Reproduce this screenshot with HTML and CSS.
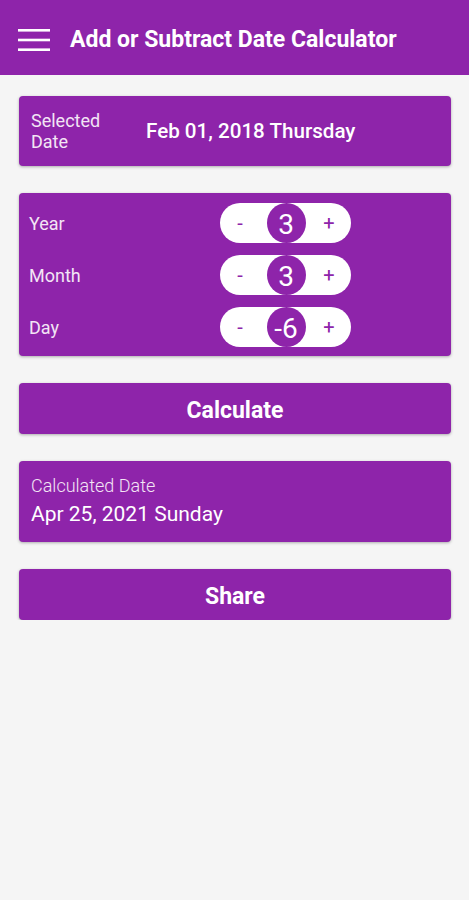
FILE: index.html
```html
<!DOCTYPE html>
<html lang="en">
<head>
    <meta charset="UTF-8">
    <meta name="viewport" content="width=device-width, initial-scale=1.0">
    <title>Add or Subtract Date Calculator</title>
    <link rel="stylesheet" href="styles.css">
</head>
<body>
    <header class="toolbar">
        <svg class="menu" width="32" height="24" viewBox="0 0 32 24">
            <rect x="0" y="1" width="32" height="2.6" fill="#fff"/>
            <rect x="0" y="10.7" width="32" height="2.6" fill="#fff"/>
            <rect x="0" y="20.4" width="32" height="2.6" fill="#fff"/>
        </svg>
        <h1 class="title">Add or Subtract Date Calculator</h1>
    </header>

    <main class="content">
        <div class="card selected">
            <div class="selected-label">Selected<br>Date</div>
            <div class="selected-value">Feb 01, 2018 Thursday</div>
        </div>

        <div class="card steppers">
            <div class="row">
                <span class="row-label">Year</span>
                <div class="pill">
                    <span class="sign">-</span>
                    <span class="num">3</span>
                    <span class="sign">+</span>
                </div>
            </div>
            <div class="row">
                <span class="row-label">Month</span>
                <div class="pill">
                    <span class="sign">-</span>
                    <span class="num">3</span>
                    <span class="sign">+</span>
                </div>
            </div>
            <div class="row">
                <span class="row-label">Day</span>
                <div class="pill">
                    <span class="sign">-</span>
                    <span class="num">-6</span>
                    <span class="sign">+</span>
                </div>
            </div>
        </div>

        <button class="card btn">Calculate</button>

        <div class="card result">
            <div class="result-label">Calculated Date</div>
            <div class="result-value">Apr 25, 2021 Sunday</div>
        </div>

        <button class="card btn">Share</button>
    </main>
</body>
</html>
```

FILE: styles.css
```css
body {
    margin: 0;
    background: #f5f5f5;
    font-family: Roboto, "Liberation Sans", sans-serif;
    color: #fff;
}

.toolbar {
    height: 75px;
    background: #8e24aa;
    display: flex;
    align-items: center;
    padding-left: 18px;
    box-sizing: border-box;
}

.menu {
    margin-top: 5px;
}

.title {
    margin: 4px 0 0 20px;
    font-size: 23px;
    font-weight: 700;
}

.content {
    padding: 21px 18px 0 19px;
    display: flex;
    flex-direction: column;
    gap: 27px;
}

.card {
    background: #8e24aa;
    border-radius: 4px;
    box-shadow: 0 1px 3px rgba(0, 0, 0, 0.3);
}

.selected {
    height: 70px;
    display: flex;
    align-items: center;
    padding-left: 12px;
}

.selected-label {
    font-size: 18px;
    line-height: 21px;
    width: 115px;
    color: #f3e5f5;
}

.selected-value {
    font-size: 20.6px;
    font-weight: 500;
}

.steppers {
    height: 163px;
    box-sizing: border-box;
    padding: 10px 0 0 10px;
    display: flex;
    flex-direction: column;
    gap: 12px;
}

.row {
    display: flex;
    align-items: center;
    height: 40px;
}

.row-label {
    width: 191px;
    font-size: 18px;
    color: #f3e5f5;
}

.pill {
    width: 131px;
    height: 40px;
    border-radius: 20px;
    background: #fff;
    display: flex;
    align-items: center;
    justify-content: space-between;
    padding: 0 16px 0 14px;
    box-sizing: border-box;
}

.sign {
    color: #8e24aa;
    font-size: 20px;
    width: 12px;
    text-align: center;
}

.num {
    width: 39px;
    height: 40px;
    margin-left: 3px;
    border-radius: 50%;
    background: #8e24aa;
    color: #fff;
    font-size: 28px;
    display: flex;
    align-items: center;
    justify-content: center;
    padding-top: 3px;
    box-sizing: border-box;
}

.btn {
    height: 51px;
    border: none;
    color: #fff;
    font-family: inherit;
    font-size: 23px;
    font-weight: 700;
    padding: 3px 0 0;
}

.result {
    height: 81px;
    box-sizing: border-box;
    padding: 14px 12px 0;
}

.result-label {
    font-size: 18px;
    font-weight: 300;
    color: #f3e5f5;
}

.result-value {
    font-size: 21px;
    margin-top: 6px;
}
```
